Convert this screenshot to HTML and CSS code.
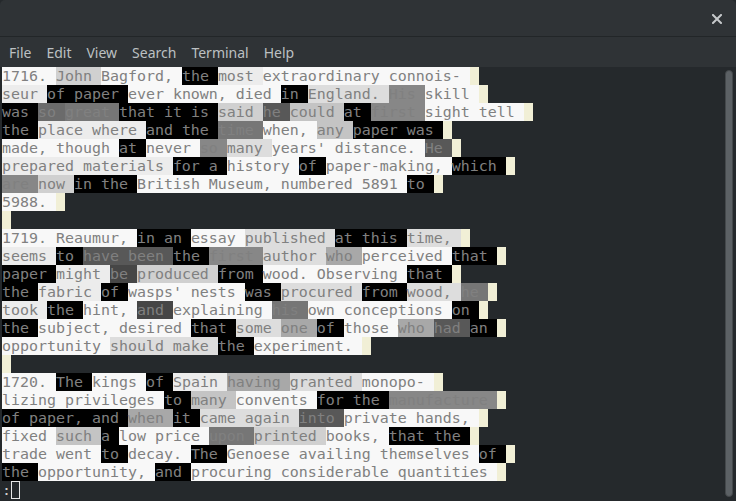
FILE: index.html
```html
<!DOCTYPE html>
<html>
<head>
<meta charset="utf-8">
<link rel="stylesheet" href="styles.css">
</head>
<body>
<div class="window">
  <header class="titlebar">
    <svg class="close" width="10" height="10" viewBox="0 0 10 10"><path d="M1 1 L9 9 M9 1 L1 9" stroke="#c6c9cb" stroke-width="2" stroke-linecap="square"/></svg>
  </header>
  <nav class="menubar">
    <span>File</span><span>Edit</span><span>View</span><span>Search</span><span>Terminal</span><span>Help</span>
  </nav>
  <main class="term">
    <div class="screen">
      <div class="ln"><span class="w">1716. </span><span class="l2">John </span><span class="w">Bagford, </span><span class="k">the </span><span class="w2">most </span><span class="w">extraordinary connois- </span><span class="c"> </span></div>
      <div class="ln"><span class="w2">seur </span><span class="k">of paper </span><span class="w">ever known, died </span><span class="k">in </span><span class="l1">England. </span><span class="g">His </span><span class="w">skill </span><span class="c"> </span></div>
      <div class="ln"><span class="k">was </span><span class="d3">so </span><span class="g2">great </span><span class="k">that it is </span><span class="l2">said </span><span class="d">he </span><span class="l3">could </span><span class="k">at </span><span class="g">first </span><span class="w">sight tell </span><span class="c"> </span></div>
      <div class="ln"><span class="k">the </span><span class="w2">place where </span><span class="k">and the </span><span class="g2">time </span><span class="w">when, </span><span class="l3">any </span><span class="k">paper was </span><span class="c"> </span></div>
      <div class="ln"><span class="w">made, though </span><span class="k">at </span><span class="w">never </span><span class="g">so </span><span class="l1">many </span><span class="w">years' distance. </span><span class="d">He </span><span class="c"> </span></div>
      <div class="ln"><span class="w2">prepared materials </span><span class="k">for a </span><span class="w">history </span><span class="k">of </span><span class="w">paper-making, </span><span class="k">which </span><span class="c"> </span></div>
      <div class="ln"><span class="g">are </span><span class="l2">now </span><span class="k">in the </span><span class="w">British Museum, numbered 5891 </span><span class="k">to </span><span class="c"> </span></div>
      <div class="ln"><span class="w">5988. </span><span class="c"> </span></div>
      <div class="ln"><span class="c"> </span></div>
      <div class="ln"><span class="w">1719. Reaumur, </span><span class="k">in an </span><span class="w">essay </span><span class="l1">published </span><span class="k">at this </span><span class="l1">time, </span><span class="c"> </span></div>
      <div class="ln"><span class="w2">seems </span><span class="k">to </span><span class="d">have been </span><span class="k">the </span><span class="g">first </span><span class="l1">author </span><span class="m">who </span><span class="w">perceived </span><span class="k">that </span><span class="c"> </span></div>
      <div class="ln"><span class="k">paper </span><span class="w2">might </span><span class="d2">be </span><span class="l2">produced </span><span class="k">from </span><span class="w">wood. Observing </span><span class="k">that </span><span class="c"> </span></div>
      <div class="ln"><span class="k">the </span><span class="w2">fabric </span><span class="k">of </span><span class="w">wasps' nests </span><span class="k">was </span><span class="l1">procured </span><span class="k">from </span><span class="l1">wood, </span><span class="g2">he </span><span class="c"> </span></div>
      <div class="ln"><span class="w2">took </span><span class="k">the </span><span class="w">hint, </span><span class="d2">and </span><span class="w">explaining </span><span class="g2">his </span><span class="w">own conceptions </span><span class="k">on </span><span class="c"> </span></div>
      <div class="ln"><span class="k">the </span><span class="w">subject, desired </span><span class="k">that </span><span class="l1">some </span><span class="m">one </span><span class="k">of </span><span class="w">those </span><span class="m">who </span><span class="d">had </span><span class="k">an </span><span class="c"> </span></div>
      <div class="ln"><span class="w">opportunity </span><span class="l1">should make </span><span class="k">the </span><span class="w">experiment. </span><span class="c"> </span></div>
      <div class="ln"><span class="c"> </span></div>
      <div class="ln"><span class="w">1720. </span><span class="k">The </span><span class="w">kings </span><span class="k">of </span><span class="w2">Spain </span><span class="m">having </span><span class="l1">granted </span><span class="w">monopo- </span><span class="c"> </span></div>
      <div class="ln"><span class="w">lizing privileges </span><span class="k">to </span><span class="l3">many </span><span class="w">convents </span><span class="k">for the </span><span class="g">manufacture </span><span class="c"> </span></div>
      <div class="ln"><span class="k">of paper, and </span><span class="m">when </span><span class="k">it </span><span class="l1">came again </span><span class="d">into </span><span class="w">private hands, </span><span class="c"> </span></div>
      <div class="ln"><span class="w">fixed </span><span class="l3">such </span><span class="k">a </span><span class="w">low price </span><span class="g2">upon </span><span class="l2">printed </span><span class="w">books, </span><span class="k">that the </span><span class="c"> </span></div>
      <div class="ln"><span class="w">trade went </span><span class="k">to </span><span class="w">decay. </span><span class="k">The </span><span class="w">Genoese availing themselves </span><span class="k">of </span><span class="c"> </span></div>
      <div class="ln"><span class="k">the </span><span class="w">opportunity, </span><span class="k">and </span><span class="w">procuring considerable quantities </span><span class="c"> </span></div>
      <div class="ln prompt"><span>:</span><span class="cursor"></span></div>
    </div>
    <div class="scroll"><div class="thumb"></div></div>
  </main>
</div>
</body>
</html>
```

FILE: styles.css
```css
html, body {
  margin: 0;
  padding: 0;
  background: #25292c;
  overflow: hidden;
}

.window {
  width: 736px;
  height: 501px;
  display: flex;
  flex-direction: column;
  background: #25292c;
}

.titlebar {
  height: 36px;
  flex: 0 0 36px;
  background: #2f3336;
  border-bottom: 1px solid #222628;
  display: flex;
  align-items: center;
  justify-content: flex-end;
  padding-right: 14px;
  border-radius: 5px 5px 0 0;
}

.close {
  display: block;
  margin-top: 2px;
}

.menubar {
  height: 30px;
  flex: 0 0 30px;
  background: #2f3336;
  display: flex;
  align-items: center;
  gap: 15px;
  padding-left: 9px;
  font-family: "Noto Sans", sans-serif;
  font-size: 14px;
  color: #bcc0c2;
}

.term {
  flex: 1;
  display: flex;
  min-height: 0;
}

.screen {
  flex: 1;
  padding-left: 2px;
  font-family: "DejaVu Sans Mono", monospace;
  font-size: 14.95px;
  line-height: 18px;
  color: #808080;
}

.ln {
  display: flex;
  height: 18px;
  white-space: pre;
}

.ln span {
  white-space: pre;
  height: 18px;
}

.w  { background: #f8f8f8; }
.w2 { background: #ececec; }
.l1 { background: #dddddd; }
.l2 { background: #d0d0d0; }
.l3 { background: #c4c4c4; }
.m  { background: #a8a8a8; }
.g  { background: #878787; }
.g2 { background: #767676; }
.d3 { background: #6b6b6b; }
.d  { background: #585858; }
.d2 { background: #464646; }
.k  { background: #000000; }
.c  { background: #f1efd6; }

.prompt {
  color: #d0d0d0;
}

.cursor {
  display: block;
  width: 9px;
  height: 18px;
  box-sizing: border-box;
  border: 1px solid #e8e8e8;
}

.scroll {
  width: 14px;
  flex: 0 0 14px;
  padding: 3px 3px 4px 3px;
  box-sizing: border-box;
}

.thumb {
  height: 100%;
  width: 8px;
  background: #5c6165;
  border: 1px solid #44484b;
  box-sizing: border-box;
  border-radius: 4px;
}
```
